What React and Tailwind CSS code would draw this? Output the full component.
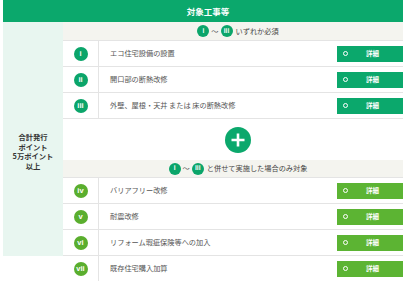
import React from 'react';

const font = { fontFamily: '"Noto Sans CJK JP", "Noto Sans", sans-serif' };

const rowsA = [
  { num: 'i', label: 'エコ住宅設備の設置' },
  { num: 'ii', label: '開口部の断熱改修' },
  { num: 'iii', label: '外壁、屋根・天井 または 床の断熱改修' },
];

const rowsB = [
  { num: 'iv', label: 'バリアフリー改修' },
  { num: 'v', label: '耐震改修' },
  { num: 'vi', label: 'リフォーム瑕疵保険等への加入' },
];

const Num = ({ n, light, small }) => (
  <span
    className={`inline-flex items-center justify-center rounded-full text-white font-bold leading-none ${
      light ? 'bg-[#5aae2e]' : 'bg-[#0ba56a]'
    } ${small ? 'w-[12px] h-[12px] text-[6.5px]' : 'w-[14px] h-[14px] text-[7.5px]'}`}
    style={{ fontFamily: '"Liberation Sans", sans-serif' }}
  >
    {n}
  </span>
);

const Row = ({ num, label, light }) => (
  <div className="flex h-[26px] border-b border-[#e4e4e4]">
    <div className="w-[36px] flex items-center justify-center border-r border-[#e4e4e4]">
      <Num n={num} light={light} />
    </div>
    <div className="flex-1 flex items-center pl-[11px] text-[7.2px] text-[#555]">{label}</div>
    <div className="flex items-center pr-[6px]">
      <button
        className={`w-[70px] h-[16px] flex items-center text-white font-bold text-[6.5px] ${
          light ? 'bg-[#5cb433]' : 'bg-[#0ba86c]'
        }`}
      >
        <span className="ml-[6px] w-[5px] h-[5px] rounded-full border-[1.5px] border-white" />
        <span className="flex-1 text-center pr-[10px]">詳細</span>
      </button>
    </div>
  </div>
);

const SubHead = ({ text, h }) => (
  <div
    className={`${h} bg-[#f4f4ef] border-b border-[#e4e4e4] flex items-center justify-center gap-[1px] text-[7.2px] text-[#444]`}
  >
    <Num n="i" small />
    <span className="text-[#555] mx-[1px]">〜</span>
    <Num n="iii" small />
    <span className="ml-[2px]">{text}</span>
  </div>
);

export default function App() {
  return (
    <div className="w-[403px] h-[281px] overflow-hidden bg-white" style={font}>
      <div className="ml-[3px] w-[410px]">
        <div className="h-[22px] bg-[#0ba86c] flex items-center justify-center text-white font-bold text-[8.5px]">
          対象工事等
        </div>
        <div className="flex">
          <div className="w-[60px] bg-[#e8f6f0] flex flex-col items-center justify-center pt-[26px] text-[7.3px] font-bold text-[#333] leading-[9.5px] text-center">
            <div>合計発行</div>
            <div>ポイント</div>
            <div>5万ポイント</div>
            <div>以上</div>
          </div>
          <div className="flex-1">
            <SubHead text="いずれか必須" h="h-[19px]" />
            {rowsA.map((r) => (
              <Row key={r.num} {...r} />
            ))}
            <div className="h-[41px] flex items-center justify-center">
              <div className="w-[26px] h-[26px] rounded-full bg-[#0ba86c] flex items-center justify-center">
                <svg width="16" height="16" viewBox="0 0 16 16">
                  <path d="M8 1.5v13M1.5 8h13" stroke="#fff" strokeWidth="2.6" />
                </svg>
              </div>
            </div>
            <SubHead text="と併せて実施した場合のみ対象" h="h-[18px]" />
            {rowsB.map((r) => (
              <Row key={r.num} {...r} light />
            ))}
          </div>
        </div>
        <div className="flex">
          <div className="w-[60px] bg-white border-b border-[#e4e4e4]" />
          <div className="flex-1">
            <Row num="vii" label="既存住宅購入加算" light />
          </div>
        </div>
      </div>
    </div>
  );
}
